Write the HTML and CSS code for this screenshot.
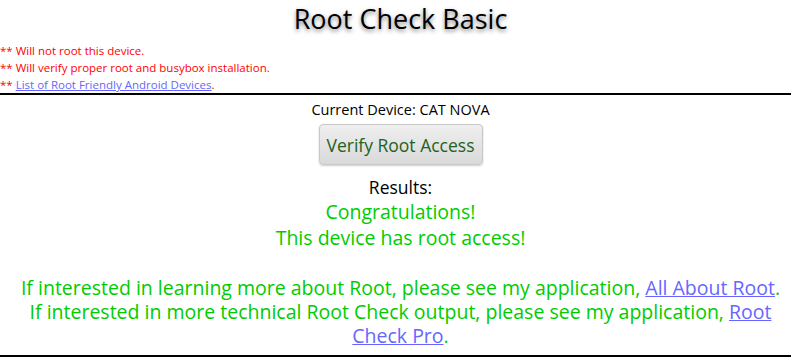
FILE: index.html
```html
<!DOCTYPE html>
<html lang="en">
<head>
  <meta charset="UTF-8">
  <title>Root Check Basic</title>
  <link rel="stylesheet" href="styles.css">
</head>
<body>

  <!-- Title -->
  <h1 class="title">Root Check Basic</h1>

  <!-- Notes -->
  <div class="notes">
    <div>** Will not root this device.</div>
    <div>** Will verify proper root and busybox installation.</div>
    <div>** <a href="#">List of Root Friendly Android Devices</a>.</div>
  </div>

  <div class="main">
    <div class="device">Current Device: CAT NOVA</div>
    <button class="verify">Verify Root Access</button>

    <div class="results">
      <div class="label">Results:</div>
      <div class="ok">Congratulations!<br>This device has root access!</div>
      <div class="more">
        If interested in learning more about Root, please see my application, <a href="#">All About Root</a>.<br>
        If interested in more technical Root Check output, please see my application, <a href="#">Root Check Pro</a>.
      </div>
    </div>
  </div>

</body>
</html>
```

FILE: styles.css
```css
* {
  margin: 0;
  padding: 0;
  box-sizing: border-box;
}

body {
  background: #fff;
  font-family: "Open Sans", "Noto Sans", sans-serif;
  color: #000;
}

a {
  color: #6666ff;
}

/* Title */
.title {
  font-size: 27px;
  font-weight: normal;
  text-align: center;
  line-height: 37px;
  padding-left: 10px;
  height: 42px;
  text-shadow: 0 2px 4px rgba(0, 0, 0, 0.5);
}

/* Notes */
.notes {
  color: #ff0000;
  font-size: 11.5px;
  line-height: 17px;
  border-bottom: 2px solid #000;
}

/* Main area */
.main {
  display: flex;
  flex-direction: column;
  align-items: center;
  text-align: center;
  padding-left: 10px;
  padding-bottom: 7px;
  border-bottom: 2px solid #000;
}

.device {
  font-size: 14.5px;
  line-height: 18px;
  margin-top: 6px;
}

.verify {
  font-family: inherit;
  font-size: 17.5px;
  color: #1d621d;
  width: 164px;
  height: 41px;
  margin-top: 5px;
  border: 1px solid #c8c8c8;
  border-radius: 4px;
  background: linear-gradient(#efefef, #d9d9d9);
  box-shadow: 0 1px 2px rgba(0, 0, 0, 0.2);
}

.results {
  margin-top: 10px;
}

.label {
  font-size: 17.5px;
  line-height: 24px;
}

.ok,
.more {
  color: #00cc00;
  font-size: 19.5px;
  line-height: 26px;
}

.more {
  margin-top: 25px;
  line-height: 24px;
}
```
